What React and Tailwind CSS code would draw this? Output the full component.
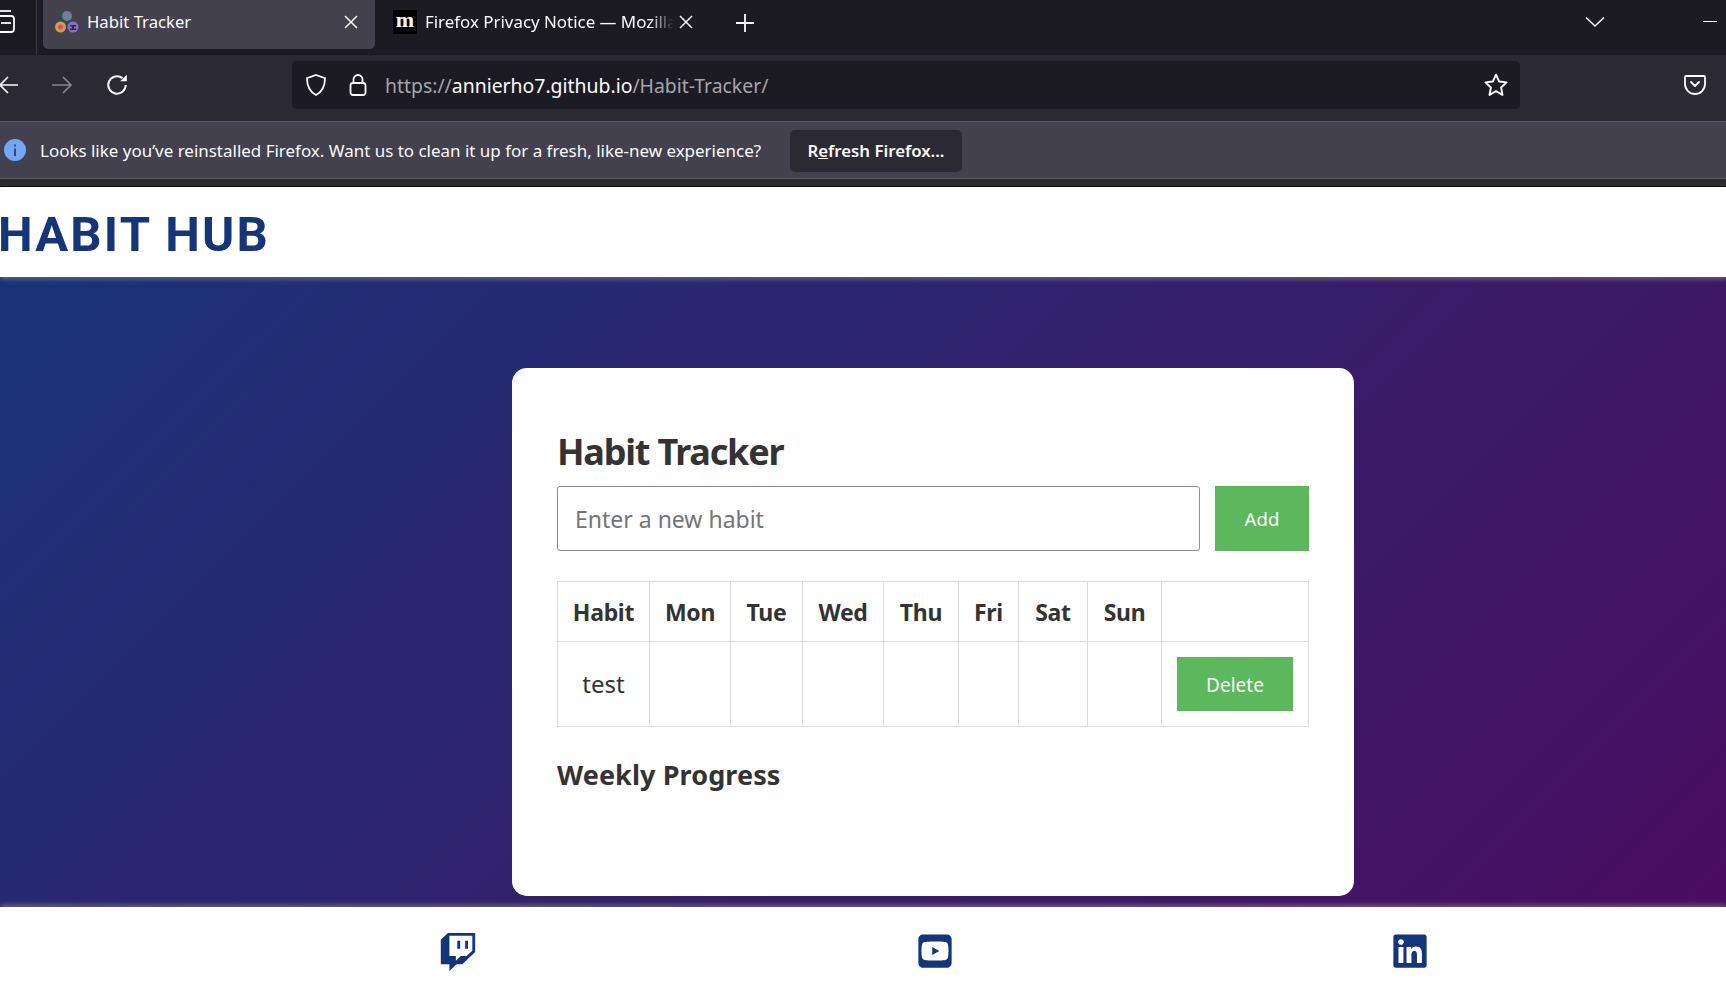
import React from "react";
import { FaTwitch, FaLinkedin, FaSquareYoutube } from "react-icons/fa6";

function FavHabit() {
  return (
    <svg width="24" height="24" viewBox="0 0 24 24" className="shrink-0">
      <circle cx="12" cy="6" r="5" fill="#4b8f9e" />
      <path d="M9.500 5c1-1.500 2.200-.6 2.500 0 .3-.6 1.500-1.500 2.500 0 .4 1.500-2.500 3-2.500 3S9 6.500 9.500 5z" fill="#d9506a" />
      <circle cx="5.500" cy="17" r="5.500" fill="#c9a24a" />
      <circle cx="5.500" cy="17" r="2.500" fill="#d9506a" />
      <circle cx="18" cy="17" r="5.500" fill="#8a6fc9" />
      <path d="M15 15h6v1.500h-2v2h2V20h-6v-1.500h2v-2h-2z" fill="#2c2a4d" />
    </svg>
  );
}

export default function App() {
  return (
    <div className="w-[1726px] h-[988px] overflow-hidden flex flex-col bg-white font-['Noto_Sans',sans-serif]">
      {/* Tab strip */}
      <div className="h-[55px] shrink-0 bg-[#1c1b22] flex items-start text-[#fbfbfe]">
        <div className="w-[37px] h-[55px] shrink-0 border-r border-[#3a3944] flex items-start">
          <svg width="18" height="24" viewBox="0 0 18 24" fill="none" stroke="#fbfbfe" strokeWidth="1.800" className="-ml-[3px] mt-[10px] shrink-0">
            <path d="M3 1h11" />
            <path d="M0 6h14a3 3 0 0 1 3 3v10a3 3 0 0 1-3 3H0" />
            <path d="M4 13h10" />
          </svg>
        </div>
        <div className="ml-[6px] w-[332px] h-[49px] shrink-0 bg-[#42414d] rounded-b-[5px] flex items-center pl-[12px] pr-[17px] pb-[5px]">
          <FavHabit />
          <span className="ml-[8px] text-[16.700px] flex-1">Habit Tracker</span>
          <svg width="14" height="14" viewBox="0 0 14 14" stroke="#fbfbfe" strokeWidth="1.500"><path d="M1 1l12 12M13 1L1 13" /></svg>
        </div>
        <div className="w-[318px] h-[49px] shrink-0 flex items-center pl-[18px] pb-[5px]">
          <span className="w-[24px] h-[24px] bg-black flex items-center justify-center text-white font-bold text-[22px] leading-none font-['Liberation_Serif',serif] shrink-0 pb-[5px]">m</span>
          <span className="ml-[8px] text-[16.900px] whitespace-nowrap w-[250px] overflow-hidden [mask-image:linear-gradient(to_right,black_90%,transparent)]">Firefox Privacy Notice — Mozilla</span>
          <svg width="14" height="14" viewBox="0 0 14 14" stroke="#fbfbfe" strokeWidth="1.500" className="shrink-0 ml-[5px]"><path d="M1 1l12 12M13 1L1 13" /></svg>
        </div>
        <svg width="18" height="18" viewBox="0 0 18 18" stroke="#fbfbfe" strokeWidth="1.800" className="ml-[43px] mt-[14px] shrink-0"><path d="M9 0v18M0 9h18" /></svg>
        <svg width="20" height="12" viewBox="0 0 20 12" fill="none" stroke="#fbfbfe" strokeWidth="1.600" className="ml-[831px] mt-[16px] shrink-0"><path d="M1 1.500l9 8.500 9-8.500" /></svg>
        <div className="ml-[98px] mt-[21px] w-[14px] h-[1px] bg-[#fbfbfe] shrink-0" />
      </div>

      {/* Navigation bar */}
      <div className="h-[66px] shrink-0 bg-[#2b2a33] flex items-center pb-[6px]">
        <svg width="22" height="20" viewBox="0 0 22 20" fill="none" stroke="#fbfbfe" strokeWidth="1.700" className="-ml-[2px] shrink-0"><path d="M20 10H2M10 2l-8 8 8 8" /></svg>
        <svg width="22" height="20" viewBox="0 0 22 20" fill="none" stroke="#85858b" strokeWidth="1.700" className="ml-[31px] shrink-0"><path d="M1 10h18M12 2l8 8-8 8" /></svg>
        <svg width="24" height="24" viewBox="0 0 22 22" fill="none" stroke="#fbfbfe" strokeWidth="1.800" className="ml-[32px] shrink-0"><path d="M19 11a8 8 0 1 1-3-6.300" /><path d="M20 1.500v6h-6z" fill="#fbfbfe" stroke="none" /></svg>
        <div className="ml-[163px] w-[1228px] h-[48px] shrink-0 bg-[#1c1b22] rounded-[5px] flex items-center pl-[12px] pr-[11px]">
          <svg width="24" height="24" viewBox="0 0 24 24" fill="none" stroke="#fbfbfe" strokeWidth="1.800" className="shrink-0"><path d="M12 2l9 3.200c0 7-2 13-9 16.800C5 18.200 3 12.200 3 5.200z" /></svg>
          <svg width="18" height="24" viewBox="0 0 18 24" fill="none" stroke="#fbfbfe" strokeWidth="1.800" className="ml-[21px] shrink-0"><rect x="1.500" y="10" width="15" height="12" rx="2.500" /><path d="M4.500 10V6.500a4.500 4.500 0 0 1 9 0V10" /></svg>
          <div className="ml-[18px] mt-[2px] text-[19.400px] leading-none whitespace-nowrap text-[#a4a4ab] flex-1">
            https://<span className="text-[#fbfbfe]">annierho7.github.io</span>/Habit-Tracker/
          </div>
          <svg width="26" height="26" viewBox="0 0 24 24" fill="none" stroke="#fbfbfe" strokeWidth="1.800" strokeLinejoin="round" className="shrink-0"><path d="M12 2.500l2.900 6.300 6.800.8-5 4.700 1.300 6.800-6-3.400-6 3.400 1.300-6.800-5-4.700 6.800-.8z" /></svg>
        </div>
        <svg width="22" height="20" viewBox="0 0 22 20" fill="none" stroke="#fbfbfe" strokeWidth="1.800" strokeLinecap="round" strokeLinejoin="round" className="ml-[164px] shrink-0"><path d="M2 1h18a1 1 0 0 1 1 1v7a10 10 0 0 1-20 0V2a1 1 0 0 1 1-1z" /><path d="M7 7l4 4 4-4" /></svg>
      </div>

      {/* Notification bar */}
      <div className="h-[58px] shrink-0 bg-[#42414d] border-y border-[#5b5a65] flex items-center">
        <svg width="22" height="22" viewBox="0 0 22 22" className="ml-[4px] shrink-0"><circle cx="11" cy="11" r="11" fill="#73a7f3" /><path d="M10 9.500h2V17h-2zM10 5.500h2v2h-2z" fill="#2b4a80" /></svg>
        <span className="ml-[14px] text-[16.970px] text-[#fbfbfe] whitespace-nowrap w-[722px] shrink-0 mt-[1px]">Looks like you’ve reinstalled Firefox. Want us to clean it up for a fresh, like-new experience?</span>
        <button className="ml-[28px] mt-[2px] h-[42px] w-[172px] shrink-0 rounded-[5px] bg-[#2b2a33] text-[#fbfbfe] text-[16.800px] font-semibold">R<span className="underline">e</span>fresh Firefox...</button>
      </div>
      <div className="h-[8px] shrink-0 bg-[#2b2a33] border-b border-black" />

      {/* Site header */}
      <header className="h-[90px] shrink-0 bg-white relative z-10 shadow-[0_2px_5px_rgba(130,130,130,0.7)] flex items-center">
        <h1 className="text-[49px] leading-none font-bold tracking-[2.200px] text-[#14357a] whitespace-nowrap font-['Roboto',sans-serif] -ml-[2px] mt-[5px]">HABIT HUB</h1>
      </header>

      {/* Main */}
      <main className="h-[630px] shrink-0 bg-[linear-gradient(135deg,#1a3478,#4b0d62)] pt-[91px] pl-[512px]">
        <div className="w-[842px] h-[528px] bg-white rounded-[15px] pt-[61px] px-[45px]">
          <h2 className="text-[36px] leading-[46px] font-bold text-[#333] tracking-[-1.200px]">Habit Tracker</h2>
          <div className="flex mt-[11px] h-[65px] gap-[15px]">
            <input placeholder="Enter a new habit" className="w-[643px] h-[65px] border border-[#8f8f9d] rounded-[3px] px-[17px] text-[23px] placeholder:text-[#757575] outline-none" />
            <button className="w-[94px] h-[65px] bg-[#5cb85c] text-white text-[18.600px]">Add</button>
          </div>
          <table className="mt-[30px] w-[751px] border-collapse table-fixed text-[#333]">
            <colgroup>
              <col className="w-[92px]" /><col className="w-[81px]" /><col className="w-[72px]" /><col className="w-[81px]" /><col className="w-[75px]" /><col className="w-[60px]" /><col className="w-[69px]" /><col className="w-[74px]" /><col className="w-[147px]" />
            </colgroup>
            <thead>
              <tr className="h-[60px] text-[23px] font-bold">
                {["Habit", "Mon", "Tue", "Wed", "Thu", "Fri", "Sat", "Sun", ""].map((d, i) => (
                  <th key={i} className="border border-[#ddd] p-0 pt-[2px] font-bold tracking-[-0.3px]">{d}</th>
                ))}
              </tr>
            </thead>
            <tbody>
              <tr className="h-[85px] text-[24px]">
                <td className="border border-[#ddd] text-center">test</td>
                <td className="border border-[#ddd]" /><td className="border border-[#ddd]" /><td className="border border-[#ddd]" /><td className="border border-[#ddd]" /><td className="border border-[#ddd]" /><td className="border border-[#ddd]" /><td className="border border-[#ddd]" />
                <td className="border border-[#ddd] text-center align-middle">
                  <button className="block mx-auto w-[116px] h-[54px] pt-[2px] bg-[#5cb85c] text-white text-[19px]">Delete</button>
                </td>
              </tr>
            </tbody>
          </table>
          <h3 className="mt-[30px] text-[27px] leading-[36px] font-bold text-[#333] tracking-[0.1px]">Weekly Progress</h3>
        </div>
      </main>

      {/* Footer */}
      <footer className="flex-1 bg-white relative z-10 shadow-[0_-2px_5px_rgba(130,130,130,0.7)] text-[#14357a]">
        <div className="ml-[220px] w-[1428px] h-full flex justify-around items-start pt-[25px]">
          <FaTwitch className="w-[38px] h-[40px]" />
          <FaSquareYoutube className="w-[38px] h-[38px] ml-[2px]" />
          <FaLinkedin className="w-[38px] h-[38px]" />
        </div>
      </footer>
    </div>
  );
}
